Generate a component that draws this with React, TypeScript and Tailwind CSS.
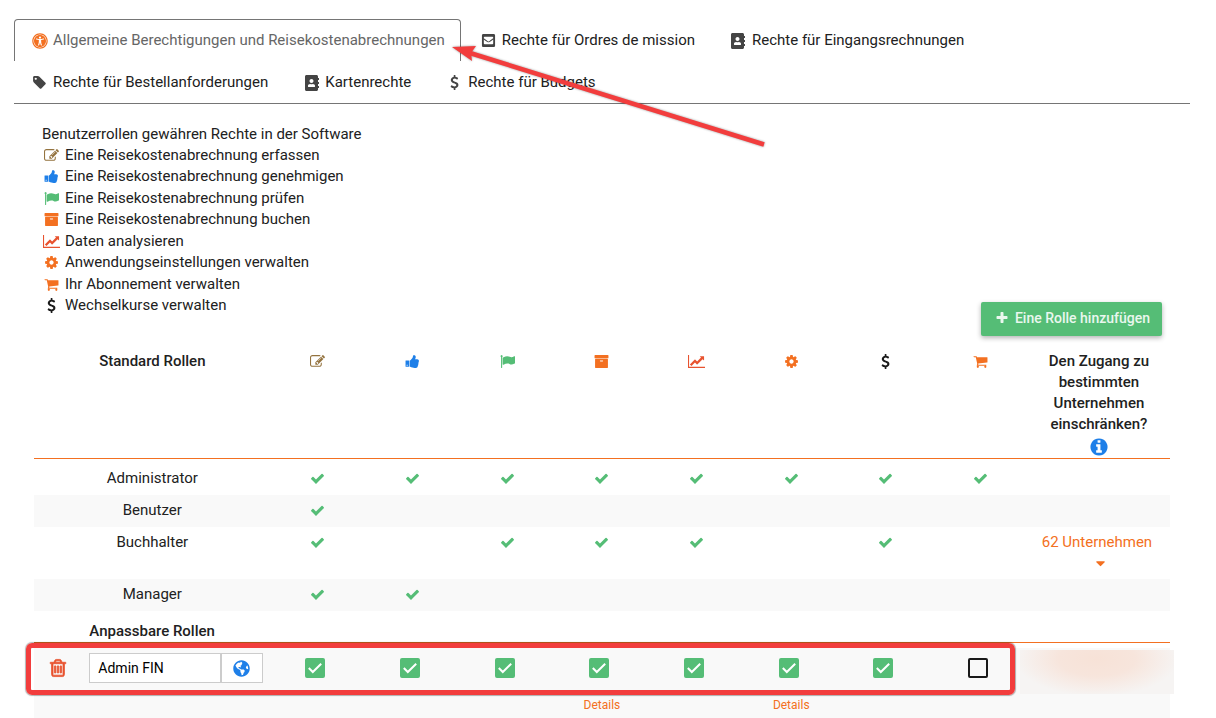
import { ReactNode, useState } from 'react';
import { FaAddressBook, FaEnvelopeSquare, FaGlobeAmericas, FaUniversalAccess } from 'react-icons/fa';

const paths = {
	edit: 'M888 1184l116-116-152-152-116 116v56h96v96h56zm440-720q-16-16-33 1l-350 350q-17 17-1 33t33-1l350-350q17-17 1-33zm80 594v190q0 119-84.5 203.5t-203.5 84.5h-832q-119 0-203.5-84.5t-84.5-203.5v-832q0-119 84.5-203.5t203.5-84.5h832q63 0 117 25 15 7 18 23 3 17-9 29l-49 49q-14 14-32 8-23-6-45-6h-832q-66 0-113 47t-47 113v832q0 66 47 113t113 47h832q66 0 113-47t47-113v-126q0-13 9-22l64-64q15-15 35-7t20 29zm-96-738l288 288-672 672h-288v-288zm444 132l-92 92-288-288 92-92q28-28 68-28t68 28l152 152q28 28 28 68t-28 68z',
	thumb: 'M320 1344q0-26-19-45t-45-19q-27 0-45.5 19t-18.5 45q0 27 18.5 45.5t45.5 18.5q26 0 45-18.5t19-45.5zm160-512v640q0 26-19 45t-45 19h-288q-26 0-45-19t-19-45v-640q0-26 19-45t45-19h288q26 0 45 19t19 45zm1184 0q0 86-55 149 15 44 15 76 3 76-43 137 17 56 0 117-15 57-54 94 9 112-49 181-64 76-197 78h-129q-66 0-144-15.5t-121.5-29-120.5-39.5q-123-43-158-44-26-1-45-19.5t-19-44.5v-641q0-25 18-43.5t43-20.5q24-2 76-59t101-121q68-87 101-120 18-18 31-48t17.5-48.5 13.5-60.5q7-39 12.5-61t19.5-52 34-50q19-19 45-19 46 0 82.5 10.5t60 26 40 40.5 24 45 12 50 5 45 .5 39q0 38-9.5 76t-19 60-27.5 56q-3 6-10 18t-11 22-8 24h277q78 0 135 57t57 135z',
	flag: 'M320 256q0 72-64 110v1266q0 13-9.5 22.5t-22.5 9.5h-64q-13 0-22.5-9.5t-9.5-22.5v-1266q-64-38-64-110 0-53 37.5-90.5t90.5-37.5 90.5 37.5 37.5 90.5zm1472 64v763q0 25-12.5 38.5t-39.5 27.5q-215 116-369 116-61 0-123.5-22t-108.5-48-115.5-48-142.5-22q-192 0-464 146-17 9-33 9-26 0-45-19t-19-45v-742q0-32 31-55 21-14 79-43 236-120 421-120 107 0 200 29t219 88q38 19 88 19 54 0 117.5-21t110-47 88-47 54.5-21q26 0 45 19t19 45z',
	archive: 'M1088 832q0-26-19-45t-45-19h-256q-26 0-45 19t-19 45 19 45 45 19h256q26 0 45-19t19-45zm576-192v960q0 26-19 45t-45 19h-1408q-26 0-45-19t-19-45v-960q0-26 19-45t45-19h1408q26 0 45 19t19 45zm64-448v256q0 26-19 45t-45 19h-1536q-26 0-45-19t-19-45v-256q0-26 19-45t45-19h1536q26 0 45 19t19 45z',
	chart: 'M2048 1536v128h-2048v-1536h128v1408h1920zm-128-1248v435q0 21-19.5 29.5t-35.5-7.5l-121-121-633 633q-10 10-23 10t-23-10l-233-233-416 416-192-192 585-585q10-10 23-10t23 10l233 233 464-464-121-121q-16-16-7.5-35.5t29.5-19.5h435q14 0 23 9t9 23z',
	cog: 'M1152 896q0-106-75-181t-181-75-181 75-75 181 75 181 181 75 181-75 75-181zm512-109v222q0 12-8 23t-20 13l-185 28q-19 54-39 91 35 50 107 138 10 12 10 25t-9 23q-27 37-99 108t-94 71q-12 0-26-9l-138-108q-44 23-91 38-16 136-29 186-7 28-36 28h-222q-14 0-24.5-8.5t-11.5-21.5l-28-184q-49-16-90-37l-141 107q-10 9-25 9-14 0-25-11-126-114-165-168-7-10-7-23 0-12 8-23 15-21 51-66.5t54-70.5q-27-50-41-99l-183-27q-13-2-21-12.5t-8-23.5v-222q0-12 8-23t19-13l186-28q14-46 39-92-40-57-107-138-10-12-10-24 0-10 9-23 26-36 98.5-107.5t94.5-71.5q13 0 26 10l138 107q44-23 91-38 16-136 29-186 7-28 36-28h222q14 0 24.5 8.5t11.5 21.5l28 184q49 16 90 37l142-107q9-9 24-9 13 0 25 10 129 119 165 170 7 8 7 22 0 12-8 23-15 21-51 66.5t-54 70.5q26 50 41 98l183 28q13 2 21 12.5t8 23.5z',
	cart: 'M704 1536q0 52-38 90t-90 38-90-38-38-90 38-90 90-38 90 38 38 90zm896 0q0 52-38 90t-90 38-90-38-38-90 38-90 90-38 90 38 38 90zm128-1088v512q0 24-16.5 42.5t-40.5 21.5l-1044 122q13 60 13 70 0 16-24 64h920q26 0 45 19t19 45-19 45-45 19h-1024q-26 0-45-19t-19-45q0-11 8-31.5t16-36 21.5-40 15.5-29.5l-177-823h-204q-26 0-45-19t-19-45 19-45 45-19h256q16 0 28.5 6.5t19.5 15.5 13 24.5 8 26 5.5 29.5 4.5 26h1201q26 0 45 19t19 45z',
	dollar: 'M1362 1185q0 153-99.5 263.5t-258.5 136.5v175q0 14-9 23t-23 9h-135q-13 0-22.5-9.5t-9.5-22.5v-175q-66-9-127.5-31t-101.5-44.5-74-48-46.5-37.5-17.5-18q-17-21-2-41l103-135q7-10 23-12 15-2 24 9l2 2q113 99 243 125 37 8 74 8 81 0 142.5-43t61.5-122q0-28-15-53t-33.5-42-58.5-37.5-66-32-80-32.5q-39-16-61.5-25t-61.5-26.5-62.5-31-56.5-35.5-53.5-42.5-43.5-49-35.5-58-21-66.5-8.5-78q0-138 98-242t255-134v-180q0-13 9.5-22.5t22.5-9.5h135q14 0 23 9t9 23v176q57 6 110.5 23t87 33.5 63.5 37.5 39 29 15 14q17 18 5 38l-81 146q-8 15-23 16-14 3-27-7-3-3-14.5-12t-39-26.5-58.5-32-74.5-26-85.5-11.5q-95 0-155 43t-60 111q0 26 8.5 48t29.5 41.5 39.5 33 56 31 60.5 27 70 27.5q53 20 81 31.5t76 35 75.5 42.5 62 50 53 63.5 31.5 76.5 13 94z',
	check: 'M1671 566q0 40-28 68l-724 724-136 136q-28 28-68 28t-68-28l-136-136-362-362q-28-28-28-68t28-68l136-136q28-28 68-28t68 28l294 295 656-657q28-28 68-28t68 28l136 136q28 28 28 68z',
	plus: 'M1600 736v192q0 40-28 68t-68 28h-416v416q0 40-28 68t-68 28h-192q-40 0-68-28t-28-68v-416h-416q-40 0-68-28t-28-68v-192q0-40 28-68t68-28h416v-416q0-40 28-68t68-28h192q40 0 68 28t28 68v416h416q40 0 68 28t28 68z',
	info: 'M1152 1376v-160q0-14-9-23t-23-9h-96v-512q0-14-9-23t-23-9h-320q-14 0-23 9t-9 23v160q0 14 9 23t23 9h96v320h-96q-14 0-23 9t-9 23v160q0 14 9 23t23 9h448q14 0 23-9t9-23zm-128-896v-160q0-14-9-23t-23-9h-192q-14 0-23 9t-9 23v160q0 14 9 23t23 9h192q14 0 23-9t9-23zm640 416q0 209-103 385.5t-279.5 279.5-385.5 103-385.5-103-279.5-279.5-103-385.5 103-385.5 279.5-279.5 385.5-103 385.5 103 279.5 279.5 103 385.5z',
	trash: 'M704 736v576q0 14-9 23t-23 9h-64q-14 0-23-9t-9-23v-576q0-14 9-23t23-9h64q14 0 23 9t9 23zm256 0v576q0 14-9 23t-23 9h-64q-14 0-23-9t-9-23v-576q0-14 9-23t23-9h64q14 0 23 9t9 23zm256 0v576q0 14-9 23t-23 9h-64q-14 0-23-9t-9-23v-576q0-14 9-23t23-9h64q14 0 23 9t9 23zm128 724v-948h-896v948q0 22 7 40.5t14.5 27 10.5 8.5h832q3 0 10.5-8.5t14.5-27 7-40.5zm-672-1076h448l-48-117q-7-9-17-11h-317q-10 2-17 11zm928 32v64q0 14-9 23t-23 9h-96v948q0 83-47 143.5t-113 60.5h-832q-66 0-113-58.5t-47-141.5v-952h-96q-14 0-23-9t-9-23v-64q0-14 9-23t23-9h309l70-167q15-37 54-63t79-26h320q40 0 79 26t54 63l70 167h309q14 0 23 9t9 23z',
	tag: 'M576 448q0-53-37.5-90.5t-90.5-37.5-90.5 37.5-37.5 90.5 37.5 90.5 90.5 37.5 90.5-37.5 37.5-90.5zm1067 576q0 53-37 90l-491 492q-39 37-91 37-53 0-90-37l-715-716q-38-37-64.5-101t-26.5-117v-416q0-52 38-90t90-38h416q53 0 117 26.5t102 64.5l715 714q37 39 37 91z',
	caret: 'M1408 704q0 26-19 45l-448 448q-19 19-45 19t-45-19l-448-448q-19-19-19-45t19-45 45-19h896q26 0 45 19t19 45z',
};

type IconName = keyof typeof paths;

function Icon({ name, className = 'h-[15px]' }: { name: IconName; className?: string }) {
	return (
		<svg
			viewBox={name === 'chart' ? '0 0 2048 1792' : '0 0 1792 1792'}
			fill="currentColor"
			aria-hidden="true"
			className={`inline-block shrink-0 ${className}`}
		>
			<path d={paths[name]} />
		</svg>
	);
}

interface Right {
	icon: IconName;
	color: string;
	label: string;
}

const edit: Right = { icon: 'edit', color: 'text-[#94733f]', label: 'Eine Reisekostenabrechnung erfassen' };
const approve: Right = { icon: 'thumb', color: 'text-[#1e7fe8]', label: 'Eine Reisekostenabrechnung genehmigen' };
const verify: Right = { icon: 'flag', color: 'text-[#55bd76]', label: 'Eine Reisekostenabrechnung prüfen' };
const book: Right = { icon: 'archive', color: 'text-[#f37021]', label: 'Eine Reisekostenabrechnung buchen' };
const analyse: Right = { icon: 'chart', color: 'text-[#e8532f]', label: 'Daten analysieren' };
const settings: Right = { icon: 'cog', color: 'text-[#f37021]', label: 'Anwendungseinstellungen verwalten' };
const subscription: Right = { icon: 'cart', color: 'text-[#f37021]', label: 'Ihr Abonnement verwalten' };
const rates: Right = { icon: 'dollar', color: 'text-[#1a1a1a]', label: 'Wechselkurse verwalten' };

const legend = [edit, approve, verify, book, analyse, settings, subscription, rates];
const columns = [edit, approve, verify, book, analyse, settings, rates, subscription];

const tabs: { label: string; icon: ReactNode }[] = [
	{ label: 'Allgemeine Berechtigungen und Reisekostenabrechnungen', icon: <FaUniversalAccess className="size-4 shrink-0 text-[#f37021]" /> },
	{ label: 'Rechte für Ordres de mission', icon: <FaEnvelopeSquare className="size-[15px]" /> },
	{ label: 'Rechte für Eingangsrechnungen', icon: <FaAddressBook className="size-4 shrink-0" /> },
	{ label: 'Rechte für Bestellanforderungen', icon: <Icon name="tag" /> },
	{ label: 'Kartenrechte', icon: <FaAddressBook className="size-4 shrink-0" /> },
	{ label: 'Rechte für Budgets', icon: <Icon name="dollar" /> },
];

const roles = [
	{ name: 'Administrator', rights: [1, 1, 1, 1, 1, 1, 1, 1] },
	{ name: 'Benutzer', rights: [1, 0, 0, 0, 0, 0, 0, 0] },
	{ name: 'Buchhalter', rights: [1, 0, 1, 1, 1, 0, 1, 0], companies: '62 Unternehmen' },
	{ name: 'Manager', rights: [1, 1, 0, 0, 0, 0, 0, 0] },
];

function Tabs() {
	const [active, setActive] = useState(0);

	return (
		<div role="tablist" className="flex flex-wrap border-b border-[#757575]">
			{tabs.map((tab, i) => (
				<button
					key={tab.label}
					role="tab"
					aria-selected={i === active}
					onClick={() => setActive(i)}
					className={`mr-0.5 flex h-[42px] items-center gap-1.5 rounded-t border border-b-0 pr-[15px] pl-[17px] ${
						i === active ? 'border-[#757575] text-[#666]' : 'border-transparent'
					}`}
				>
					<span className="flex w-[15px] justify-center text-[#444]">{tab.icon}</span>
					{tab.label}
				</button>
			))}
		</div>
	);
}

function RightCheckbox({ label, initial }: { label: string; initial: boolean }) {
	const [checked, setChecked] = useState(initial);

	return (
		<span className="inline-grid size-5 align-top">
			<input
				type="checkbox"
				aria-label={label}
				checked={checked}
				onChange={() => setChecked(!checked)}
				className="col-start-1 row-start-1 size-5 appearance-none rounded-xs border-2 border-[#1a1a1a] checked:border-[#55bd76] checked:bg-[#55bd76]"
			/>
			{checked && (
				<svg viewBox="0 0 20 20" className="pointer-events-none col-start-1 row-start-1 size-5" fill="none" stroke="#fff" strokeWidth="2">
					<path d="M3.800 10l4 4L16.200 5.800" />
				</svg>
			)}
		</span>
	);
}

function RuleRow() {
	return (
		<tr className="h-px bg-[#f37021]"><td colSpan={24} /></tr>
	);
}

function RolesTable() {
	return (
		<table className="w-full table-fixed border-separate border-spacing-0 text-center">
			<colgroup>
				{Array.from({ length: 24 }, (_, i) => <col key={i} />)}
			</colgroup>
			<thead>
				<tr className="align-top">
					<th scope="col" colSpan={5} className="pt-2 font-medium">Standard Rollen</th>
					{columns.map(({ icon, color, label }) => (
						<th key={icon} scope="col" colSpan={2} className="pt-2">
							<span className={`flex h-5 items-center justify-center ${color}`} title={label}>
								<Icon name={icon} />
							</span>
						</th>
					))}
					<th scope="col" colSpan={3} className="px-2 pt-2 font-medium">
						Den Zugang zu bestimmten Unternehmen einschränken?
						<span className="flex h-[23px] items-center justify-center text-[#1e7fe8]">
							<Icon name="info" className="h-5" />
						</span>
					</th>
				</tr>
				<RuleRow />
			</thead>
			<tbody>
				<tr className="h-1"><td colSpan={24} /></tr>
				{roles.map(({ name, rights, companies }, row) => (
					<tr key={name} className={`align-top ${row % 2 ? 'bg-[#f9f9f9]' : ''}`}>
						<td colSpan={5} className="pt-[5px] pb-1.5">{name}</td>
						{rights.map((granted, i) => (
							<td key={i} colSpan={2} className="pt-[5px] text-[#55bd76]">
								<span className="flex h-5 items-center justify-center">
									{granted ? <Icon name="check" /> : null}
								</span>
							</td>
						))}
						<td colSpan={3} className="py-[5px] text-[#f37021]">
							{companies && (
								<button className="inline-flex flex-col items-center pr-1 align-top">
									{companies}
									<span className="flex h-[21px] items-center pl-2"><Icon name="caret" /></span>
								</button>
							)}
						</td>
					</tr>
				))}
			</tbody>
			<tbody>
				<tr>
					<td />
					<th scope="rowgroup" colSpan={23} className="pt-[10px] pl-2 text-left font-medium">Anpassbare Rollen</th>
				</tr>
				<RuleRow />
				<tr className="h-[5px]"><td colSpan={24} /></tr>
				<tr className="relative h-[47px] bg-[#f9f9f9] align-top">
					<td className="pt-[9px]">
						<button aria-label="Rolle löschen" className="align-top text-[#e8532f]">
							<Icon name="trash" className="h-5 stroke-current stroke-[70px]" />
						</button>
						<div className="pointer-events-none absolute -top-[5px] right-[155px] bottom-0 -left-2 rounded-md border-[5px] border-[#f23d3d] shadow-[0_0_1px_1px_rgba(0,0,0,0.3)]" />
					</td>
					<td colSpan={4} className="px-2 pt-[5px]">
						<div className="flex h-[30px]">
							<input
								type="text"
								aria-label="Rollenname"
								defaultValue="Admin FIN"
								className="min-w-0 flex-1 border border-[#ccc] bg-white px-2 text-sm text-black"
							/>
							<button aria-label="Übersetzen" className="flex w-[42px] items-center justify-center border border-[#ccc] bg-white text-[#1e7fe8]">
								<FaGlobeAmericas className="size-[17px]" />
							</button>
						</div>
					</td>
					{columns.map(({ icon, label }, i) => (
						<td key={icon} colSpan={2} className="pt-2.5 pr-[5px]">
							<RightCheckbox label={label} initial={i < 7} />
						</td>
					))}
					<td colSpan={3} className="pt-0.5">
						<div className="-mr-1 -ml-2 h-11 bg-[#f6f4f3] bg-[radial-gradient(ellipse_at_50%_20%,#f7e2d7_0%,#f7e5dc_35%,#f6f4f3_75%)]" />
					</td>
				</tr>
				<tr className="h-[23px] bg-[#f9f9f9] align-top text-xs text-[#f37021]">
					<td colSpan={5} />
					{columns.map(({ icon }) => (
						<td key={icon} colSpan={2}>
							{(icon === 'archive' || icon === 'cog') && <a href="#details" className="block leading-5">Details</a>}
						</td>
					))}
					<td colSpan={3} />
				</tr>
			</tbody>
		</table>
	);
}

export default function App() {
	return (
		<div className="relative bg-white pt-[19px] pr-[26px] pl-[14px] font-[Roboto,sans-serif] text-[15px] leading-[21px] text-[#212121]">
			<Tabs />

			<div className="px-5">
				<div className="flex items-end justify-between px-2 pt-5">
					<div className="pb-5">
						<p>Benutzerrollen gewähren Rechte in der Software</p>
						<ul className="flex h-[171px] flex-col justify-between">
							{legend.map(({ icon, color, label }) => (
								<li key={icon} className="flex items-center gap-1">
									<span className={`flex w-[19px] justify-center ${color}`}><Icon name={icon} /></span>
									{label}
								</li>
							))}
						</ul>
					</div>
					<button className="flex h-[34px] items-center gap-1.5 rounded-xs bg-[#55bd76] pr-3 pb-0.5 pl-[14px] text-sm font-medium text-[#eaf7ee] shadow-[0_2px_5px_rgba(0,0,0,0.3)]">
						<Icon name="plus" className="h-[14px]" />
						Eine Rolle hinzufügen
					</button>
				</div>
				<div className="pt-[7px]">
					<RolesTable />
				</div>
			</div>

			<svg width="780" height="160" viewBox="0 0 780 160" className="pointer-events-none absolute top-0 left-0 drop-shadow-[0_0_1px_rgba(0,0,0,0.4)]" aria-hidden="true">
				<path d="M470 53L764 144.500" stroke="#f23d3d" strokeWidth="4.500" />
				<path d="M452 47L476 46L471 53L472 61Z" fill="#f23d3d" />
			</svg>
		</div>
	);
}
